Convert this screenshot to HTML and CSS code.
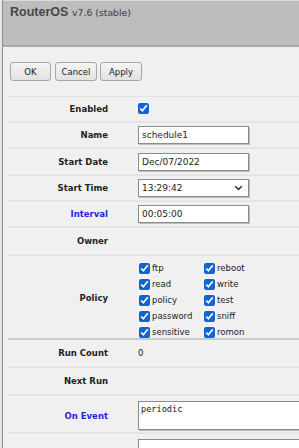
FILE: index.html
```html
<!DOCTYPE html>
<html lang="en">
<head>
    <meta charset="UTF-8">
    <meta name="viewport" content="width=device-width, initial-scale=1.0">
    <title>RouterOS - Scheduler</title>
    <link rel="stylesheet" href="styles.css">
</head>
<body>
    <div class="page">
        <div class="side"></div>
        <div class="main">
            <div class="header">
                <span class="brand">RouterOS</span>
                <span class="version">v7.6 (stable)</span>
            </div>

            <div class="toolbar">
                <button class="btn btn-ok">OK</button>
                <button class="btn btn-cancel">Cancel</button>
                <button class="btn btn-apply">Apply</button>
            </div>

            <div class="form">
                <div class="row row-check">
                    <label class="label">Enabled</label>
                    <div class="value"><input type="checkbox" checked></div>
                </div>
                <div class="row row-input">
                    <label class="label">Name</label>
                    <div class="value"><input class="text" type="text" value="schedule1"></div>
                </div>
                <div class="row row-input row-tall">
                    <label class="label">Start Date</label>
                    <div class="value"><input class="text" type="text" value="Dec/07/2022"></div>
                </div>
                <div class="row row-input">
                    <label class="label">Start Time</label>
                    <div class="value">
                        <div class="select">
                            <span>13:29:42</span>
                            <svg width="9" height="6" viewBox="0 0 9 6"><path d="M1.2 1.2 L4.5 4.4 L7.8 1.2" fill="none" stroke="#333" stroke-width="1.5"/></svg>
                        </div>
                    </div>
                </div>
                <div class="row row-input">
                    <label class="label link">Interval</label>
                    <div class="value"><input class="text" type="text" value="00:05:00"></div>
                </div>
                <div class="row row-empty">
                    <label class="label">Owner</label>
                    <div class="value"></div>
                </div>
                <div class="row row-policy">
                    <label class="label">Policy</label>
                    <div class="value policy">
                        <label class="opt"><input type="checkbox" checked>ftp</label>
                        <label class="opt"><input type="checkbox" checked>reboot</label>
                        <label class="opt"><input type="checkbox" checked>read</label>
                        <label class="opt"><input type="checkbox" checked>write</label>
                        <label class="opt"><input type="checkbox" checked>policy</label>
                        <label class="opt"><input type="checkbox" checked>test</label>
                        <label class="opt"><input type="checkbox" checked>password</label>
                        <label class="opt"><input type="checkbox" checked>sniff</label>
                        <label class="opt"><input type="checkbox" checked>sensitive</label>
                        <label class="opt"><input type="checkbox" checked>romon</label>
                    </div>
                </div>
                <div class="row row-empty">
                    <label class="label">Run Count</label>
                    <div class="value">0</div>
                </div>
                <div class="row row-empty">
                    <label class="label">Next Run</label>
                    <div class="value"></div>
                </div>
                <div class="row row-area">
                    <label class="label link">On Event</label>
                    <div class="value"><textarea>periodic</textarea></div>
                </div>
                <div class="row row-area row-last">
                    <label class="label">Comment</label>
                    <div class="value"><textarea></textarea></div>
                </div>
            </div>
        </div>
    </div>
</body>
</html>
```

FILE: styles.css
```css
body {
    margin: 0;
    background-color: #f0f0f0;
    font-family: "DejaVu Sans", Verdana, sans-serif;
    font-size: 8.5px;
    color: #222;
    overflow: hidden;
}
.page {
    display: flex;
    min-height: 100vh;
}
.side {
    width: 2px;
    background: #e6e6e6;
    border-right: 1px solid #8e8e8e;
    flex-shrink: 0;
}
.main {
    flex: 1;
    min-width: 0;
}
.header {
    height: 44px;
    background: #bdbdbd;
    border-top: 1px solid #dadada;
    border-bottom: 2px solid #a9a9a9;
    padding: 0 7px;
    box-sizing: content-box;
}
.brand {
    font-family: "Liberation Sans", Arial, sans-serif;
    font-weight: bold;
    font-size: 12.5px;
    color: #474747;
    line-height: 23px;
}
.version {
    font-size: 9.3px;
    color: #4e4e4e;
    margin-left: 1px;
    -webkit-text-stroke: 0.15px #4e4e4e;
}
.toolbar {
    height: 34px;
    padding: 15px 0 0 7px;
    display: flex;
    align-items: flex-start;
}
.btn {
    height: 19px;
    padding: 0;
    margin-right: 4px;
    font-family: inherit;
    font-size: 8.5px;
    color: #222;
    background: linear-gradient(#f4f4f4, #e2e2e2);
    border: 1px solid #a6a6a6;
    border-radius: 3px;
}
.btn-ok { width: 41px; }
.btn-cancel { width: 42px; margin-right: 3px; }
.btn-apply { width: 42px; }
.form {
    margin-left: 5px;
    border-top: 1px solid #e3e3e3;
}
.row {
    display: grid;
    grid-template-columns: 100px 1fr;
    column-gap: 30px;
    align-items: center;
    border-bottom: 2px solid #e4e4e4;
}
.label {
    text-align: right;
    font-weight: bold;
    color: #222;
}
.label.link {
    color: #2424dc;
}
.row-check { height: 24px; }
.row-input { height: 24px; }
.row-tall { height: 25px; }
.row-empty { height: 26px; }
.row-policy {
    height: 82px;
    border-bottom-color: #cbcbcb;
}
.row-policy .value {
    align-self: start;
    padding-top: 4px;
}
.row-area {
    height: 36px;
    align-items: start;
}
.row-area .label {
    align-self: center;
    padding-top: 3px;
}
.row-last .label {
    padding-top: 14px;
}
input[type="checkbox"] {
    width: 11px;
    height: 11px;
    margin: 0;
    accent-color: #0f63d6;
}
.text, .select {
    width: 111px;
    height: 18px;
    box-sizing: border-box;
    border: 1px solid #8c8c8c;
    box-shadow: 1px 1px 0 #bdbdbd;
    background: #fff;
    font-family: inherit;
    font-size: 9px;
    color: #222;
    padding: 0 3px;
    margin: 0;
    outline: none;
}
.select {
    display: flex;
    align-items: center;
    justify-content: space-between;
    padding-right: 5px;
}
.policy {
    display: grid;
    grid-template-columns: 65px 65px;
    grid-auto-rows: 16px;
    padding-left: 1px;
}
.opt {
    display: flex;
    align-items: center;
    gap: 2px;
}
textarea {
    display: block;
    width: 220px;
    height: 29px;
    margin-top: 5px;
    box-sizing: border-box;
    border: 1px solid #8c8c8c;
    box-shadow: 1px 1px 0 #bdbdbd;
    background: #fff;
    font-family: "DejaVu Sans Mono", "Liberation Mono", monospace;
    font-size: 8.6px;
    color: #222;
    padding: 2px 2px;
    resize: none;
}
```
